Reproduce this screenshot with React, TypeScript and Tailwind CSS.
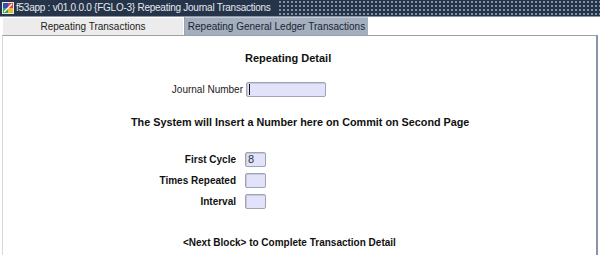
import React from "react";

function AppIcon() {
  return (
    <svg width="12" height="12" viewBox="0 0 12 12" className="shrink-0">
      <rect x="0" y="0" width="12" height="12" fill="#e8e8f0" />
      <rect x="1" y="1" width="5" height="5" fill="#3050c0" />
      <rect x="6" y="1" width="5" height="5" fill="#e04040" />
      <rect x="1" y="6" width="5" height="5" fill="#40a040" />
      <rect x="6" y="6" width="5" height="5" fill="#e0c030" />
      <path d="M2 10 L10 2" stroke="#ffffff" strokeWidth="1.2" />
    </svg>
  );
}

function Field({ w, value, cursor }: { w: string; value?: string; cursor?: boolean }) {
  return (
    <div
      className={`${w} h-[15px] shrink-0 bg-[#e2e2fb] border border-[#9ea4b4] rounded-[2px] shadow-[inset_1px_1px_0_#c8c8dc] flex items-center pl-[2px] text-[11px] leading-none text-[#333]`}
    >
      {cursor && <div className="w-[1px] h-[11px] bg-[#111]" />}
      {value}
    </div>
  );
}

export default function App() {
  return (
    <div
      className="w-[600px] h-[255px] overflow-hidden bg-white flex flex-col"
      style={{ fontFamily: '"Liberation Sans", Arial, sans-serif' }}
    >
      {/* title bar */}
      <div className="h-[17px] shrink-0 flex items-center bg-[#26344a] border-b border-[#8a96a6]">
        <div className="flex items-center gap-[2px] pl-[2px] pr-[7px] bg-[#26344a] h-full">
          <AppIcon />
          <span className="text-[10px] tracking-[-0.25px] text-[#e4e8ee] whitespace-nowrap leading-none">
            f53app : v01.0.0.0 {"{FGLO-3}"} Repeating Journal Transactions
          </span>
        </div>
        <div className="flex-1 h-full bg-[radial-gradient(circle,#8593a8_0.7px,transparent_1px)] bg-[length:4px_4px]" />
      </div>
      {/* tabs */}
      <div className="h-[18px] shrink-0 flex items-stretch bg-white pl-[3px]">
        <div className="w-[180px] bg-[#ececec] border-t border-white flex items-center justify-center text-[10px] text-[#222] whitespace-nowrap">
          Repeating Transactions
        </div>
        <div className="w-[2px] bg-white border-r border-[#9aa2ae]" />
        <div className="w-[183px] bg-[#a3afbf] border-t border-[#c4ccd6] flex items-center justify-center text-[10px] text-[#1c2430] whitespace-nowrap">
          Repeating General Ledger Transactions
        </div>
        <div className="flex-1 bg-white" />
      </div>
      {/* panel */}
      <div className="flex-1 ml-[2px] mr-[2px] border-t border-[#9aa0a8] border-l border-l-[#d8d8d8] border-r-2 border-r-[#8a94a6] bg-white flex flex-col text-[#111]">
        <div className="mt-[15px] h-[14px] flex items-center pl-[242px] font-bold text-[11px] whitespace-nowrap">
          Repeating Detail
        </div>
        <div className="mt-[17px] h-[15px] flex items-center">
          <span className="w-[240px] text-right text-[10px] text-[#222] whitespace-nowrap">Journal Number</span>
          <div className="ml-[3px]">
            <Field w="w-[80px]" cursor />
          </div>
        </div>
        <div className="mt-[18px] h-[14px] flex items-center pl-[128px] font-bold text-[10.8px] whitespace-nowrap">
          The System will Insert a Number here on Commit on Second Page
        </div>
        <div className="mt-[23px] grid grid-cols-[233px_auto] gap-x-[9px] gap-y-[6px] items-center justify-start">
          <span className="font-bold text-right text-[10px] whitespace-nowrap">First Cycle</span>
          <Field w="w-[21px]" value="8" />
          <span className="font-bold text-right text-[10px] whitespace-nowrap">Times Repeated</span>
          <Field w="w-[21px]" />
          <span className="font-bold text-right text-[10px] whitespace-nowrap">Interval</span>
          <Field w="w-[21px]" />
        </div>
        <div className="mt-[26px] h-[14px] flex items-center pl-[180px] font-bold text-[10px] whitespace-nowrap">
          &lt;Next Block&gt; to Complete Transaction Detail
        </div>
      </div>
    </div>
  );
}
